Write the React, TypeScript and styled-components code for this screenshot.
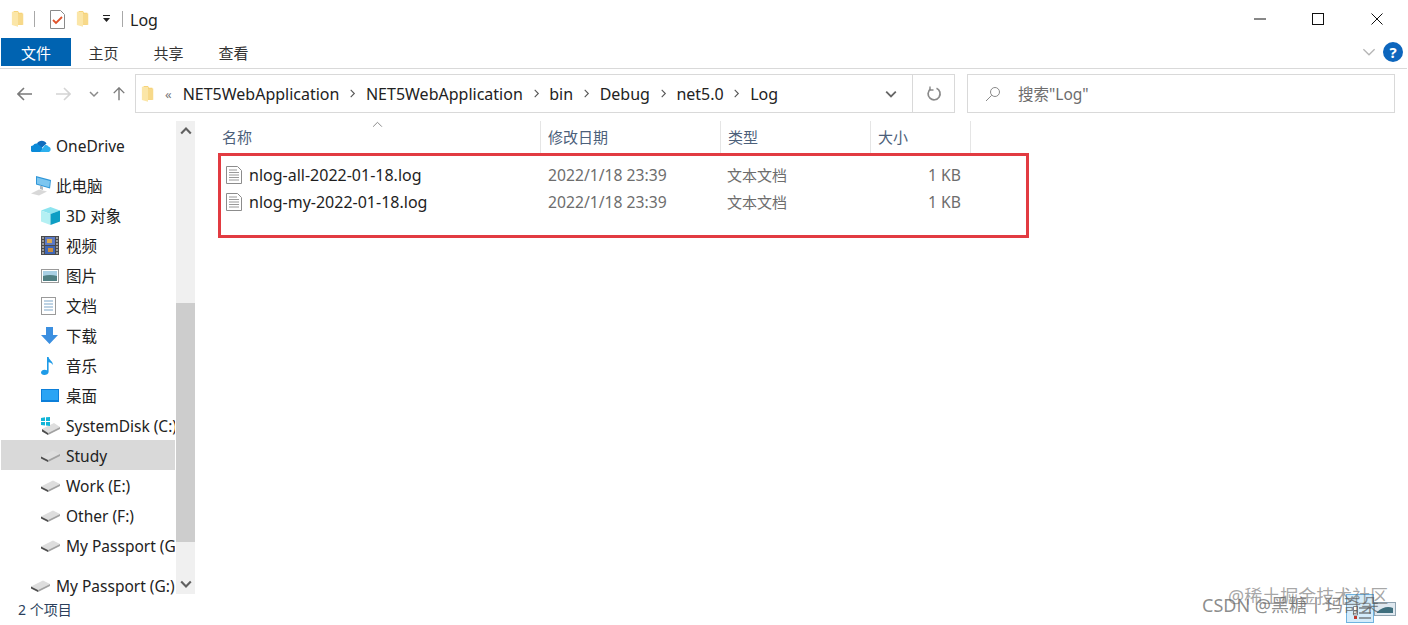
import React from 'react';
import styled, { createGlobalStyle } from 'styled-components';

const GlobalStyle = createGlobalStyle`
  html, body {
    margin: 0;
    padding: 0;
    background: #fff;
  }
  body {
    font-family: "Noto Sans", "Noto Sans CJK SC", sans-serif;
    color: #1e1e1e;
  }
`;

const Window = styled.div`
  position: relative;
  width: 1408px;
  height: 625px;
  overflow: hidden;
  display: flex;
  flex-direction: column;
  background: #fff;
`;

const TitleBar = styled.div`
  height: 38px;
  flex: none;
  display: flex;
  align-items: center;
  padding-left: 11px;
`;

const QuickIcon = styled.span<{ $gap?: number }>`
  display: flex;
  margin-right: ${({ $gap }) => $gap ?? 0}px;
`;

const TitleSeparator = styled.span<{ $gap: number }>`
  width: 1px;
  height: 16px;
  background: #a8a8a8;
  margin-right: ${({ $gap }) => $gap}px;
`;

const TitleText = styled.span`
  font-size: 16px;
  margin-top: 1px;
  color: #222;
`;

const WindowControls = styled.div`
  margin-left: auto;
  display: flex;
  align-items: center;
  padding-right: 2px;
`;

const WindowButton = styled.span`
  width: 58px;
  height: 38px;
  display: flex;
  align-items: center;
  justify-content: center;

  &:last-child {
    width: 59px;
  }
`;

const Ribbon = styled.div`
  height: 31px;
  flex: none;
  box-sizing: border-box;
  display: flex;
  align-items: flex-start;
  padding-left: 1px;
  margin-right: 1px;
  border-bottom: 1px solid #d9d9d9;
`;

const FileTab = styled.div`
  width: 70px;
  height: 28px;
  background: #0063b1;
  color: #fff;
  font-size: 15px;
  display: flex;
  align-items: center;
  justify-content: center;
`;

const RibbonTab = styled.div`
  width: 65px;
  height: 28px;
  font-size: 15px;
  color: #333;
  display: flex;
  align-items: center;
  justify-content: center;
`;

const RibbonRight = styled.div`
  margin-left: auto;
  height: 28px;
  display: flex;
  align-items: center;
  gap: 7px;
  padding-right: 4px;
`;

const HelpBadge = styled.span`
  width: 20px;
  height: 20px;
  border-radius: 50%;
  background: #0d66bd;
  color: #fff;
  font-size: 15px;
  font-weight: 700;
  display: flex;
  align-items: center;
  justify-content: center;
`;

const AddressRow = styled.div`
  height: 39px;
  flex: none;
  margin-top: 5px;
  display: flex;
  align-items: stretch;
`;

const NavButtons = styled.div`
  width: 135px;
  flex: none;
  display: flex;
  align-items: center;
`;

const NavButton = styled.span<{ $width: number }>`
  width: ${({ $width }) => $width}px;
  display: flex;
  justify-content: center;
`;

const AddressBox = styled.div`
  width: 820px;
  flex: none;
  box-sizing: border-box;
  border: 1px solid #d9d9d9;
  display: flex;
  align-items: center;
  padding-left: 5px;
`;

const Crumbs = styled.div`
  flex: 1;
  display: flex;
  align-items: center;
  font-size: 16px;
  color: #222;
`;

const CrumbChevron = styled.span`
  display: flex;
  width: 26.500px;
  justify-content: center;
`;

const Overflow = styled.span`
  font-size: 13px;
  color: #777;
  margin: 0 11px 0 10px;
`;

const AddressAction = styled.span<{ $divided?: boolean; $width: number }>`
  width: ${({ $width }) => $width}px;
  height: 100%;
  box-sizing: border-box;
  border-left: ${({ $divided }) => ($divided ? '1px solid #d9d9d9' : 'none')};
  display: flex;
  align-items: center;
  justify-content: center;
`;

const SearchBox = styled.div`
  width: 428px;
  margin-left: 12px;
  box-sizing: border-box;
  border: 1px solid #d9d9d9;
  display: flex;
  align-items: center;
  padding-left: 17px;
  gap: 17px;
  font-size: 15.500px;
  color: #6d6d6d;
`;

const Body = styled.div`
  height: 473px;
  margin-top: 8px;
  flex: none;
  display: flex;
`;

const Sidebar = styled.div`
  width: 175px;
  flex: none;
  box-sizing: border-box;
  padding: 9px 0 0 1px;
  display: flex;
  flex-direction: column;
`;

const NavItem = styled.div<{ $level: number; $active?: boolean; $spaced?: boolean }>`
  height: 30px;
  flex: none;
  margin-top: ${({ $spaced }) => ($spaced ? 10 : 0)}px;
  box-sizing: border-box;
  padding-top: 1px;
  padding-left: ${({ $level }) => ($level === 0 ? 29 : 39)}px;
  background: ${({ $active }) => ($active ? '#d9d9d9' : 'transparent')};
  display: flex;
  align-items: center;
  font-size: 15.500px;
  color: #222;
  white-space: nowrap;
  overflow: hidden;
`;

const NavIcon = styled.span`
  width: 25px;
  margin-left: 1px;
  flex: none;
  display: flex;
  align-items: center;
`;

const Scrollbar = styled.div`
  width: 19px;
  margin-left: 1px;
  flex: none;
  background: #f0f0f0;
  display: flex;
  flex-direction: column;
`;

const ScrollArrow = styled.span`
  height: 20px;
  flex: none;
  display: flex;
  align-items: center;
  justify-content: center;
`;

const ScrollThumb = styled.div`
  height: 239px;
  margin-top: 162px;
  background: #cdcdcd;
  flex: none;
`;

const ScrollSpacer = styled.div`
  flex: 1;
`;

const Content = styled.div`
  flex: 1;
  display: flex;
  flex-direction: column;
  padding-left: 5px;
`;

const HeaderRow = styled.div`
  height: 32px;
  flex: none;
  display: grid;
  grid-template-columns: 341px 180px 150px 100px;
`;

const HeaderCell = styled.div<{ $first?: boolean }>`
  position: relative;
  box-sizing: border-box;
  border-right: 1px solid #e5e5e5;
  padding: 0 0 2px ${({ $first }) => ($first ? 22 : 7)}px;
  font-size: 15px;
  color: #4c607a;
  display: flex;
  align-items: center;
`;

const SortCaret = styled.span`
  position: absolute;
  left: 172px;
  top: -2px;
  display: flex;
`;

const Highlight = styled.div`
  width: 811px;
  height: 85px;
  margin-left: 18px;
  box-sizing: border-box;
  border: 3.500px solid #e23b41;
  padding-top: 5px;
`;

const FileRow = styled.div`
  height: 27px;
  display: grid;
  grid-template-columns: 319px 180px 150px 91px;
  align-items: center;
  font-size: 15.700px;
  color: #6d6d6d;
`;

const FileName = styled.div`
  display: flex;
  align-items: center;
  gap: 7px;
  padding-left: 5px;
  font-size: 16px;
  color: #1e1e1e;
`;

const FileCell = styled.div`
  padding-left: 8px;
`;

const FileType = styled.div`
  padding-left: 7px;
  font-size: 15px;
`;

const FileSize = styled.div`
  text-align: right;
`;

const StatusBar = styled.div`
  flex: 1;
  display: flex;
  align-items: center;
  padding: 0 0 2px 18px;
  font-size: 14px;
  color: #2b3f5c;
`;

const ViewToggles = styled.div`
  position: absolute;
  left: 1346px;
  top: 594px;
  display: flex;
  align-items: flex-start;
`;

const ViewDetails = styled.span`
  width: 28px;
  height: 29px;
  box-sizing: border-box;
  padding: 11px 0 0 6px;
  background: #d4ecfb;
  border: 1px solid #6fb3e0;
  display: flex;
`;

const ViewLarge = styled.span`
  width: 22px;
  height: 14px;
  margin-top: 8px;
  display: flex;
`;

const Watermark = styled.div<{ $left: number; $top: number; $size: number; $alpha: number }>`
  position: absolute;
  left: ${({ $left }) => $left}px;
  top: ${({ $top }) => $top}px;
  font-size: ${({ $size }) => $size}px;
  line-height: 1.2;
  color: rgba(90, 90, 90, ${({ $alpha }) => $alpha});
  white-space: nowrap;
  pointer-events: none;
`;

const Folder = ({ size = 16 }: { size?: number }) => (
  <svg width={size} height={size * 1.25} viewBox="0 0 16 20">
    <path d="M3 1h5l1 2h4v14H3z" fill="#f5cd6a" />
    <path d="M1 2h7v17l-7-2z" fill="#fbe6a8" />
    <path d="M8 4h6v13H8z" fill="#f7d98a" />
  </svg>
);

const Drive = () => (
  <svg width="19" height="13" viewBox="0 0 19 13">
    <path d="M0 7.500 12 1.500l7 3.500-12 6z" fill="#dedede" />
    <path d="M0 7.500l7 3.500v2L0 9.500z" fill="#4d4d4d" />
    <path d="M7 11l12-6v2L7 13z" fill="#a2a2a2" />
  </svg>
);

const OneDrive = () => (
  <svg width="21" height="14" viewBox="0 0 21 14">
    <path d="M6 4.500a5.500 5.500 0 0 1 9.500 0l-6 5.500z" fill="#0f6cbd" />
    <path d="M1 13a3.500 3.500 0 0 1 1-6.600 4 4 0 0 1 4-1.900l5 4 2 4.500z" fill="#0a8ad8" />
    <path d="M9 13l5-7a4 4 0 0 1 3.500 1.400A3 3 0 0 1 18 13z" fill="#2cb0ee" />
  </svg>
);

const Computer = () => (
  <svg width="21" height="21" viewBox="0 0 21 21">
    <path d="M5 1l15 4-1 8.500L5 9.500z" fill="#2f96d8" />
    <path d="M6 2.500l13 3.500-.8 6.200L6 8.800z" fill="#7cc6f0" />
    <path d="M0 18.500l8-4 8 2-8 4z" fill="#d8d8d8" />
    <path d="M9 10.500l3 1v3.500l-3-1z" fill="#aeb8c0" />
  </svg>
);

const Cube = () => (
  <svg width="19" height="18" viewBox="0 0 19 18">
    <path d="M9.500 0 19 3.500 9.500 7 0 3.500z" fill="#8de4ef" />
    <path d="M0 3.500 9.500 7v11L0 14.500z" fill="#b4f0f3" />
    <path d="M9.500 7 19 3.500v11L9.500 18z" fill="#0e9ec4" />
  </svg>
);

const Film = () => (
  <svg width="18" height="19" viewBox="0 0 18 19">
    <rect width="18" height="19" fill="#4a4a4a" />
    <rect x="4" y="1" width="10" height="8" fill="#5b79c4" />
    <rect x="4" y="10" width="10" height="8" fill="#3f66b5" />
    <rect x="6" y="3" width="5" height="4" fill="#d9a94f" />
    <rect x="7" y="12" width="5" height="4" fill="#c98d3e" />
    <path d="M1 2h2M1 5h2M1 8h2M1 11h2M1 14h2M1 17h2M15 2h2M15 5h2M15 8h2M15 11h2M15 14h2M15 17h2" stroke="#eee" strokeWidth="1.200" />
  </svg>
);

const Picture = () => (
  <svg width="18" height="14" viewBox="0 0 18 14">
    <rect x=".5" y=".5" width="17" height="13" fill="#fff" stroke="#9a9a9a" />
    <rect x="2" y="2" width="14" height="5" fill="#a8cfe4" />
    <path d="M2 7q7-2 14 0v5H2z" fill="#4f7f83" />
  </svg>
);

const Doc = () => (
  <svg width="15" height="18" viewBox="0 0 15 18">
    <rect x=".5" y=".5" width="14" height="17" fill="#fff" stroke="#9a9a9a" />
    <path d="M3 4h9M3 7h9M3 10h9M3 13h9" stroke="#7ea7c9" strokeWidth="1.200" />
  </svg>
);

const Download = () => (
  <svg width="17" height="17" viewBox="0 0 17 17">
    <path d="M5 0h7v8h5l-8.500 9L0 8h5z" fill="#3b8fe0" />
  </svg>
);

const Music = () => (
  <svg width="13" height="18" viewBox="0 0 13 18">
    <path d="M6 0h1.600c.3 3 4.400 4 4.400 8-1-1.800-2.800-2.500-4.400-2.800V15c0 2-2.200 3-4.300 3C1.400 18 0 16.900 0 15.500S1.700 12.700 3.600 12.700c.9 0 1.800.2 2.400.6z" fill="#1e9be8" />
  </svg>
);

const Desktop = () => (
  <svg width="18" height="13" viewBox="0 0 18 13">
    <rect width="18" height="13" fill="#0c7fd9" />
    <rect x="1" y="1" width="16" height="10" fill="#2aa4f4" />
  </svg>
);

const SystemDrive = () => (
  <svg width="20" height="18" viewBox="0 0 20 18">
    <path d="M1 12l12-6 6 4-12 6z" fill="#dedede" />
    <path d="M1 12l6 4v2l-6-3.500z" fill="#4d4d4d" />
    <path d="M7 16l12-6v2L7 18z" fill="#a2a2a2" />
    <path d="M0 1l4-.7V4H0zM5 .2 9 0v4H5zM0 5h4v3.500l-4-.6zM5 5h4v4l-4-.5z" fill="#12b5d8" />
  </svg>
);

const LogFile = () => (
  <svg width="16" height="18" viewBox="0 0 16 18">
    <path d="M.5.500h11l4 4v13H.5z" fill="#fff" stroke="#8c8c8c" />
    <path d="M3 4h8M3 6.500h10M3 9h10M3 11.500h10M3 14h10" stroke="#9a9a9a" />
  </svg>
);

const Chevron = ({ dir, color, size = 10, w = 1.500 }: { dir: 'up' | 'down' | 'right'; color: string; size?: number; w?: number }) => {
  const d = { up: 'M1 7l4-4 4 4', down: 'M1 3l4 4 4-4', right: 'M3 1l4 4-4 4' }[dir];
  return (
    <svg width={size} height={size} viewBox="0 0 10 10" fill="none" stroke={color} strokeWidth={w}>
      <path d={d} />
    </svg>
  );
};

const Arrow = ({ dir, color }: { dir: 'left' | 'right' | 'up'; color: string }) => {
  const rotate = { left: 0, right: 180, up: 90 }[dir];
  return (
    <svg width="16" height="16" viewBox="0 0 16 16" fill="none" stroke={color} strokeWidth="1.600" transform={`rotate(${rotate})`}>
      <path d="M1 8h14M7 2 1 8l6 6" />
    </svg>
  );
};

const crumbs = ['NET5WebApplication', 'NET5WebApplication', 'bin', 'Debug', 'net5.0', 'Log'];

const places = [
  { label: '3D 对象', icon: <Cube /> },
  { label: '视频', icon: <Film /> },
  { label: '图片', icon: <Picture /> },
  { label: '文档', icon: <Doc /> },
  { label: '下载', icon: <Download /> },
  { label: '音乐', icon: <Music /> },
  { label: '桌面', icon: <Desktop /> },
  { label: 'SystemDisk (C:)', icon: <SystemDrive /> },
  { label: 'Study', icon: <Drive />, active: true },
  { label: 'Work (E:)', icon: <Drive /> },
  { label: 'Other (F:)', icon: <Drive /> },
  { label: 'My Passport (G:)', icon: <Drive /> },
];

const files = ['nlog-all-2022-01-18.log', 'nlog-my-2022-01-18.log'];

export default function App() {
  return (
    <Window>
      <GlobalStyle />
      <TitleBar>
        <QuickIcon $gap={9}><Folder size={14} /></QuickIcon>
        <TitleSeparator $gap={15} />
        <QuickIcon $gap={11}>
          <svg width="15" height="19" viewBox="0 0 15 19">
            <path d="M.5.500h10l4 4v14H.5z" fill="#fff" stroke="#8a8a8a" />
            <path d="M3 10l3 3 6-6" fill="none" stroke="#e0532b" strokeWidth="1.800" />
          </svg>
        </QuickIcon>
        <QuickIcon $gap={12}><Folder size={14} /></QuickIcon>
        <QuickIcon $gap={11}>
          <svg width="9" height="8" viewBox="0 0 9 8">
            <path d="M1 0h7v1H1zM1 3h7L4.500 7z" fill="#222" />
          </svg>
        </QuickIcon>
        <TitleSeparator $gap={7} />
        <TitleText>Log</TitleText>
        <WindowControls>
          <WindowButton>
            <svg width="12" height="2" viewBox="0 0 12 2"><path d="M0 1h12" stroke="#111" /></svg>
          </WindowButton>
          <WindowButton>
            <svg width="12" height="12" viewBox="0 0 12 12"><rect x=".5" y=".5" width="11" height="11" fill="none" stroke="#111" /></svg>
          </WindowButton>
          <WindowButton>
            <svg width="12" height="12" viewBox="0 0 12 12"><path d="M.5.500l11 11M11.500.500l-11 11" stroke="#111" /></svg>
          </WindowButton>
        </WindowControls>
      </TitleBar>

      <Ribbon>
        <FileTab>文件</FileTab>
        <RibbonTab>主页</RibbonTab>
        <RibbonTab>共享</RibbonTab>
        <RibbonTab>查看</RibbonTab>
        <RibbonRight>
          <Chevron dir="down" color="#b5b5b5" size={14} w={0.900} />
          <HelpBadge>?</HelpBadge>
        </RibbonRight>
      </Ribbon>

      <AddressRow>
        <NavButtons>
          <NavButton $width={50}><Arrow dir="left" color="#7a7a7a" /></NavButton>
          <NavButton $width={26}><Arrow dir="right" color="#d4d4d4" /></NavButton>
          <NavButton $width={36}><Chevron dir="down" color="#8a8a8a" /></NavButton>
          <NavButton $width={14}><Arrow dir="up" color="#7a7a7a" /></NavButton>
        </NavButtons>
        <AddressBox>
          <Crumbs>
            <Folder size={14} />
            <Overflow>«</Overflow>
            {crumbs.map((c, i) => (
              <React.Fragment key={i}>
                {i > 0 && (
                  <CrumbChevron><Chevron dir="right" color="#555" size={9} w={1.200} /></CrumbChevron>
                )}
                <span>{c}</span>
              </React.Fragment>
            ))}
          </Crumbs>
          <AddressAction $width={42}><Chevron dir="down" color="#666" size={12} /></AddressAction>
          <AddressAction $width={42} $divided>
            <svg width="16" height="16" viewBox="0 0 16 16" fill="none" stroke="#8a8a8a" strokeWidth="1.700">
              <path d="M10.500 2.300A6 6 0 1 1 4.500 3" />
              <path d="M4 .5v3.500h3.500" strokeWidth="1.400" />
            </svg>
          </AddressAction>
        </AddressBox>
        <SearchBox>
          <svg width="16" height="16" viewBox="0 0 16 16" fill="none" stroke="#8a8a8a">
            <circle cx="10" cy="6" r="4.500" />
            <path d="M6.700 9.300 1 15" />
          </svg>
          <span>搜索"Log"</span>
        </SearchBox>
      </AddressRow>

      <Body>
        <Sidebar>
          <NavItem $level={0}>
            <NavIcon><OneDrive /></NavIcon>
            OneDrive
          </NavItem>
          <NavItem $level={0} $spaced>
            <NavIcon><Computer /></NavIcon>
            此电脑
          </NavItem>
          {places.map((p) => (
            <NavItem key={p.label} $level={1} $active={p.active}>
              <NavIcon>{p.icon}</NavIcon>
              {p.label}
            </NavItem>
          ))}
          <NavItem $level={0} $spaced>
            <NavIcon><Drive /></NavIcon>
            My Passport (G:)
          </NavItem>
        </Sidebar>
        <Scrollbar>
          <ScrollArrow><Chevron dir="up" color="#606060" size={12} w={1.800} /></ScrollArrow>
          <ScrollThumb />
          <ScrollSpacer />
          <ScrollArrow><Chevron dir="down" color="#606060" size={12} w={1.800} /></ScrollArrow>
        </Scrollbar>
        <Content>
          <HeaderRow>
            <HeaderCell $first>
              名称
              <SortCaret><Chevron dir="up" color="#8a8a8a" size={11} w={0.900} /></SortCaret>
            </HeaderCell>
            <HeaderCell>修改日期</HeaderCell>
            <HeaderCell>类型</HeaderCell>
            <HeaderCell>大小</HeaderCell>
          </HeaderRow>
          <Highlight>
            {files.map((f) => (
              <FileRow key={f}>
                <FileName>
                  <LogFile />
                  {f}
                </FileName>
                <FileCell>2022/1/18 23:39</FileCell>
                <FileType>文本文档</FileType>
                <FileSize>1 KB</FileSize>
              </FileRow>
            ))}
          </Highlight>
        </Content>
      </Body>

      <StatusBar>2 个项目</StatusBar>

      <ViewToggles>
        <ViewDetails>
          <svg width="18" height="14" viewBox="0 0 18 14">
            <path d="M.5.500h4v4h-4zM.5 5h4v4h-4z" fill="#fff" stroke="#555" strokeWidth=".7" />
            <path d="M1 10h3v3H1z" fill="#c0392b" />
            <path d="M6 2h12M6 7h12M6 12h12" stroke="#444" />
          </svg>
        </ViewDetails>
        <ViewLarge>
          <svg width="22" height="14" viewBox="0 0 22 14">
            <rect x=".5" y=".5" width="21" height="13" fill="#dfe8ef" stroke="#8fa3b0" />
            <path d="M3 10q8-7 16-4v5H3z" fill="#3f6f7d" />
          </svg>
        </ViewLarge>
      </ViewToggles>

      <Watermark $left={1228} $top={586} $size={18} $alpha={0.55}>@稀土掘金技术社区</Watermark>
      <Watermark $left={1202} $top={595} $size={18} $alpha={0.7}>CSDN @黑糖丨玛奇朵</Watermark>
    </Window>
  );
}
